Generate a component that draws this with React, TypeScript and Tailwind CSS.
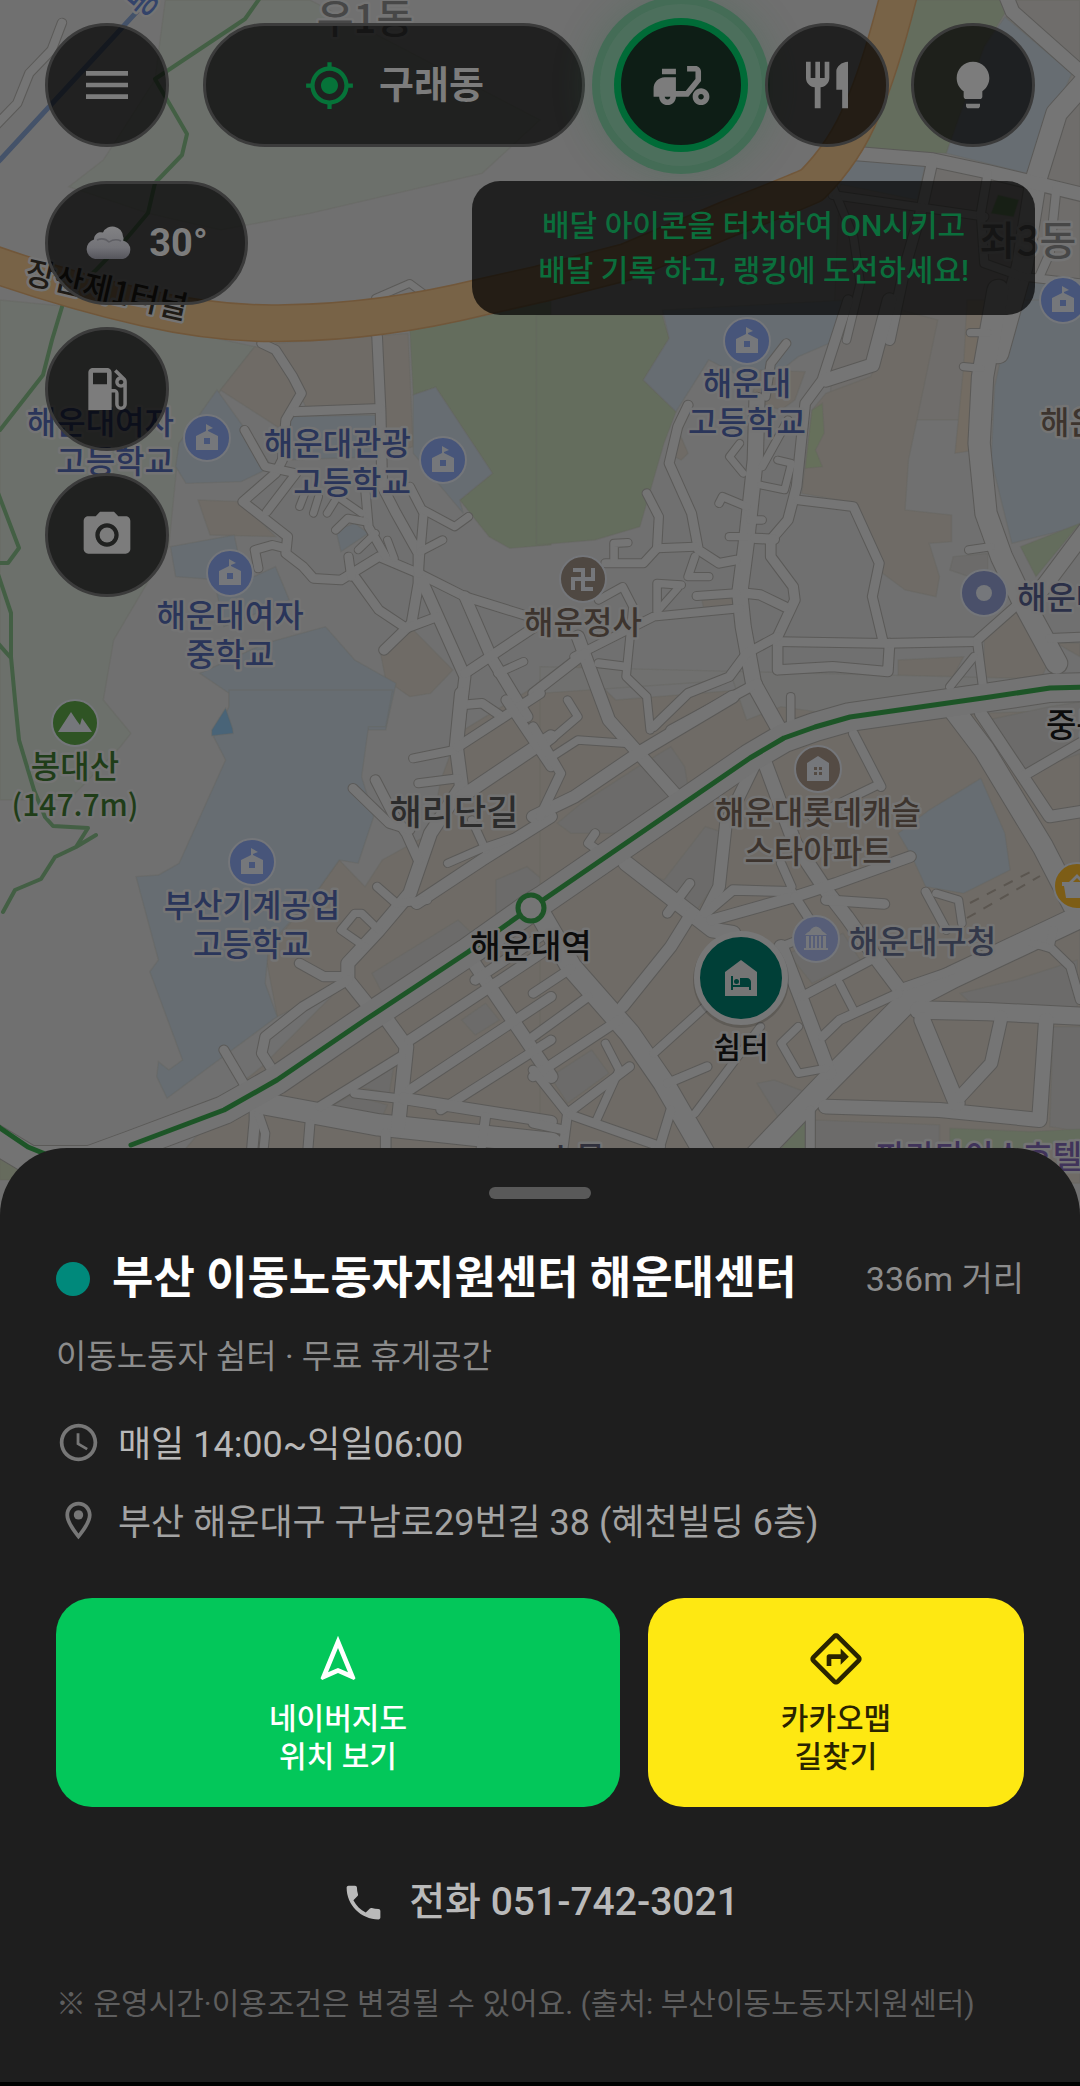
import React from 'react';
import {
  MdMenu,
  MdMyLocation,
  MdLocalGasStation,
  MdPhotoCamera,
  MdAccessTime,
  MdOutlineLocationOn,
  MdOutlineNavigation,
  MdOutlineDirections,
  MdPhone,
  MdNightShelter,
  MdLightbulb,
  MdRestaurant,
} from 'react-icons/md';

type Area = [fill: string, points: string];
type Road = [width: number, points: string];
interface Tile {
  x: number;
  y: number;
  areas: Area[];
  roads: Road[];
}

const BEIGE = '#6f6b66';
const BLUE = '#676d72';
const GREEN = '#646d5d';
const TINT = '#6c706b';
const GREY = '#6c6b6a';

const TILES: Tile[] = [
  {
    x: 0,
    y: 0,
    areas: [[TINT, '480,0 900,0 1568,360 1400,520 900,640 640,690 430,640 200,560 300,480 450,238']],
    roads: [
      [24, '180,68 150,150 85,220 50,310 -20,385'],
      [20, '1085,1000 1090,895 1190,850 1235,885'],
    ],
  },
  {
    x: 540,
    y: 0,
    areas: [
      ['#6f6d6b', '1350,0 1568,0 1568,1260 840,1260 870,560 945,445 1400,540'],
      [GREEN, '1090,0 1345,0 1350,40 1290,140 1180,460 940,450'],
      [BLUE, '1350,50 1545,220 1412,520 1180,460 1290,140'],
      [BLUE, '1400,840 1568,860 1568,1020 1370,1020'],
      [BLUE, '890,480 1120,490 1095,600 860,550'],
      ['#4f6a48', '1330,585 1390,600 1375,650 1310,640'],
    ],
    roads: [
      [40, '1350,-20 1372,35 1590,235'],
      [60, '1590,235 1500,340 1440,540 1400,800 1330,1060'],
      [40, '910,460 1140,480 1300,515 1600,590'],
      [30, '1140,480 1110,620 1060,800 1015,1020'],
      [24, '850,585 1090,620 1290,650'],
      [22, '850,560 910,710 930,850 890,1020'],
      [24, '1300,520 1280,640 1290,790 1400,830 1568,850'],
      [24, '1500,560 1480,760 1450,830'],
    ],
  },
  {
    x: 0,
    y: 300,
    areas: [
      [TINT, '0,0 200,20 740,140 520,430 490,740 330,1020 300,1200 380,1300 350,1340 200,1500 0,1500'],
      [BEIGE, '740,140 640,270 820,390 880,290 800,150'],
      [BEIGE, '800,130 1185,100 1200,440 1110,460 1090,320 890,325'],
      [GREEN, '1190,90 1420,45 1600,0 1600,735 1480,745 1420,710 1335,600 1430,520 1265,262 1200,285'],
      [BLUE, '1200,285 1265,262 1430,520 1335,600 1345,640 1280,560 1200,460'],
      [BLUE, '630,270 520,430 510,500 540,550 700,545 790,500'],
      [BLUE, '830,350 1100,345 1100,470 830,480'],
      [BEIGE, '575,600 700,605 800,710 610,705'],
      [BLUE, '495,740 680,705 700,800 640,840 510,830'],
      [BLUE, '630,880 800,800 840,900 650,980'],
      [BLUE, '975,690 1030,670 1070,700 990,755'],
      [BEIGE, '1200,990 1315,1110 1250,1180 1190,1190 1120,1140 1105,1060'],
      [BLUE, '580,1120 770,1030 945,980 1030,1080 1150,1150 1120,1290 665,1290 665,1180'],
    ],
    roads: [
      [26, '760,130 800,150 850,230 875,280 830,360 820,480 800,520 705,605 835,710 830,760 880,800 910,835 990,840 1100,770 1215,820 1350,890 1568,960'],
      [28, '1095,110 1105,330 1110,560 1150,640 1215,760 1215,850 1195,970 1115,1050'],
      [26, '855,335 1105,325'],
      [32, '1220,830 1350,1130 1330,1300'],
      [32, '1350,890 1430,1080 1530,1250'],
      [26, '1030,830 1100,930 1180,985 1270,950'],
      [24, '710,390 770,500 860,520 775,635'],
      [24, '750,805 740,750 790,735 830,745'],
      [24, '1020,830 1012,770'],
      [24, '1120,770 1070,680 1060,560'],
      [22, '975,690 1010,655 1060,665'],
      [20, '870,620 885,580'],
      [20, '910,640 925,590'],
      [20, '950,640 980,590 1050,640'],
      [24, '1190,560 1230,640 1215,820'],
      [22, '1230,630 1320,680 1360,650'],
      [22, '1220,755 1285,720'],
      [20, '1040,750 1090,700'],
      [20, '1125,720 1145,775'],
      [28, '1350,1120 1568,970'],
      [22, '1445,1120 1520,1085'],
      [26, '1340,1215 1400,1210 1450,1245'],
    ],
  },
  {
    x: 540,
    y: 300,
    areas: [
      [GREEN, '-10,45 355,45 375,115 300,240 395,335 360,430 290,680 160,720 -10,735'],
      [BLUE, '355,30 890,0 840,130 750,170 640,260 490,180 395,335 300,240 375,115'],
      [BEIGE, '640,210 770,215 740,300 700,330 610,300'],
      [BEIGE, '405,400 430,460 410,480 390,470'],
      [BEIGE, '830,280 960,230 1050,30 1155,60 1070,480 1060,630 1195,645 1195,725 1130,730 1160,830 1150,890 1060,870 995,820 985,760 920,610 760,580 790,330'],
      ['#66705b', '790,330 820,310 825,400 800,450 820,500 770,505'],
      ['#736c63', '1240,0 1300,0 1285,230 1265,450 1205,460 1230,200'],
      [BLUE, '1375,0 1600,0 1600,670 1370,730 1310,480 1320,260'],
      [GREEN, '1395,740 1568,670 1440,830'],
      [GREY, '1200,770 1300,760 1300,850 1190,810'],
      [BEIGE, '1290,1020 1400,920 1470,1100 1460,1125 1290,1150'],
      [BEIGE, '1040,1080 1230,1070 1180,1170 1100,1180 1040,1130'],
      [BEIGE, '1500,1030 1568,1030 1568,1070'],
      [BEIGE, '470,900 565,890 565,920 475,925'],
      [BEIGE, '0,1150 110,1100 140,1170 0,1230'],
    ],
    roads: [
      [28, '895,0 820,240 770,310 745,560 720,660 670,720 670,770 735,860 740,900 690,1010 690,1110 850,1100 1010,1115 1015,1030'],
      [40, '1015,0 965,195 830,240'],
      [24, '655,290 670,190 715,130'],
      [44, '630,300 625,480 600,720 580,880 590,980 620,1150 690,1280'],
      [22, '645,500 720,360'],
      [20, '580,430 550,470 590,520'],
      [20, '690,480 730,490 710,570 640,555'],
      [22, '600,620 530,590 520,610'],
      [22, '610,660 645,660'],
      [22, '550,710 600,710'],
      [26, '430,315 400,380 375,490 440,640 460,750 520,790 570,780'],
      [24, '310,580 345,650 340,745 300,790 190,790'],
      [24, '340,745 450,740'],
      [22, '215,780 215,730 255,728'],
      [22, '450,770 430,830 490,830'],
      [24, '455,888 570,880'],
      [20, '400,865 340,935'],
      [22, '340,930 340,850 410,855'],
      [24, '100,1070 330,950 580,925'],
      [28, '600,880 640,885 710,920'],
      [26, '750,600 910,620 985,790 965,890 995,1020'],
      [26, '690,1025 1000,1030 1265,1025 1380,920'],
      [24, '1270,1030 1285,1150'],
      [22, '1260,1070 1190,1160'],
      [28, '625,715 680,718'],
      [22, '170,900 240,860 270,920 250,1130 310,1190 320,1290'],
      [36, '110,1010 200,1260 390,1480'],
      [28, '130,1060 -20,1180'],
      [24, '170,1090 250,1100'],
      [26, '690,1010 600,1060 550,1130 430,1180 330,1280'],
      [28, '630,1150 380,1290'],
      [22, '728,1190 728,1270'],
      [62, '1330,-30 1285,230 1275,430 1295,640 1340,770 1400,900 1500,1090'],
      [22, '1250,98 1300,98'],
      [22, '1230,200 1280,205'],
      [22, '1245,750 1310,740'],
      [46, '1600,670 1440,890'],
      [26, '1480,1015 1600,1010'],
    ],
  },
  {
    x: 0,
    y: 700,
    areas: [
      [BEIGE, '1568,-50 1330,100 1280,240 1250,400 1110,480 1060,560 985,480 930,560 770,760 805,950 1000,850 760,1100 700,1150 540,1345 540,1500 1600,1500 1600,-50'],
      [BLUE, '665,-30 1140,-30 1120,80 1070,80 1050,230 1085,350 1040,490 985,480 930,560 780,740 770,850 805,950 485,1195 455,1130 460,1085 490,1110 530,1080 435,815 460,780 395,530 460,525 520,490 655,180 620,110 665,20'],
      ['#496478', '655,25 615,90 615,107 677,100 675,85'],
      [GREY, '1440,540 1530,500 1600,560 1600,640 1440,640'],
      [GREY, '1080,820 1330,660 1370,700 1110,880'],
      [GREY, '1340,960 1410,910 1450,960 1380,1005'],
      [GREY, '1040,1160 1145,1090 1130,1180'],
      [GREY, '960,1220 1020,1185 1125,1215 1110,1250'],
      ['#666b5d', '0,1350 90,1440 0,1440'],
    ],
    roads: [
      [38, '1340,-20 1325,140 1340,260 1250,400 1190,580 1100,690 1010,790 1010,840 1080,930'],
      [24, '1200,175 1320,150'],
      [24, '1215,250 1330,235'],
      [28, '1330,140 1568,-20'],
      [38, '1340,290 1600,110'],
      [28, '1090,240 1140,340 1180,400 1215,480'],
      [26, '1025,265 1130,370 1190,390'],
      [34, '1210,610 1400,480 1600,350'],
      [22, '1370,360 1410,450'],
      [22, '1300,490 1400,445 1500,410'],
      [28, '1470,0 1600,200'],
      [24, '1095,560 1150,610 1240,600'],
      [22, '1100,690 1050,640 1030,640 990,690 1060,740'],
      [28, '870,790 940,830 1010,830'],
      [28, '1010,840 880,920 770,1010 760,1060 800,1125'],
      [26, '650,1050 730,1190'],
      [30, '740,1180 740,1260 728,1400'],
      [24, '750,1240 770,1300 760,1400'],
      [64, '760,1210 1100,1275 1600,1330'],
      [40, '1110,940 1180,1040 1155,1290'],
      [38, '1370,780 1600,1130'],
      [30, '1190,1020 1600,740'],
      [28, '1190,1170 1600,890'],
      [28, '1380,840 1568,710'],
      [28, '930,1220 1165,1070'],
      [26, '1280,1230 1600,1020'],
      [34, '1170,1195 1600,1265'],
      [26, '1030,1180 1150,1195'],
      [26, '900,1270 890,1400'],
      [26, '1410,1250 1390,1400'],
      [28, '1120,1300 1120,1400'],
    ],
  },
  {
    x: 540,
    y: 700,
    areas: [
      [BEIGE, '0,-60 100,-120 220,0 700,-40 1568,0 1568,1450 0,1450'],
      ['#70706f', '0,-100 1600,-60 1600,30 900,50 700,20 600,60 560,-60 0,-20'],
      [GREY, '120,310 300,190 380,140 420,200 430,260 360,310 250,400 90,400 50,370'],
      [GREY, '270,510 360,540 480,380 540,400 520,530 430,670'],
      [GREY, '1300,60 1480,20 1600,0 1600,150 1400,220'],
      [GREY, '720,760 880,700 930,780 790,850'],
      [GREY, '30,1130 150,1050 200,1120 80,1210'],
      [GREY, '1220,880 1380,840 1560,780 1560,930 1250,910'],
      [GREY, '1490,980 1600,980 1600,1300 1480,1280'],
      [GREY, '790,1260 1160,1275 1160,1400 790,1400'],
      [GREY, '630,1150 680,1140 780,1180 690,1250'],
      [BLUE, '1040,400 1130,330 1280,235 1350,400 1365,510 1230,580 1120,560 1080,470'],
      [GREEN, '700,1345 770,1260 770,1400'],
      [GREEN, '1190,1285 1430,1295 1600,1285 1600,1345 1190,1345'],
    ],
    roads: [
      [36, '-20,350 100,290 300,150 560,-10'],
      [22, '20,180 110,120 250,130'],
      [22, '20,130 110,50 80,0'],
      [26, '-20,80 60,220 0,350'],
      [34, '620,200 540,370 520,560 480,640'],
      [40, '650,180 740,430 830,570 890,650 980,780 1060,890'],
      [26, '910,100 990,260'],
      [24, '790,350 980,255'],
      [60, '1180,0 1290,150 1460,440 1550,620'],
      [34, '1280,40 1480,350 1600,330'],
      [28, '1400,230 1600,110'],
      [44, '250,490 400,610 500,690 560,700'],
      [26, '370,640 435,550'],
      [24, '160,400 140,430 180,460'],
      [34, '440,640 380,740 240,920'],
      [28, '480,640 560,570 730,575'],
      [32, '500,660 740,590 860,550 1075,470'],
      [28, '830,600 1000,612'],
      [26, '740,590 790,670'],
      [24, '700,490 730,560'],
      [24, '700,740 800,700'],
      [60, '0,640 90,800 260,1000 360,1150 500,1400'],
      [66, '580,1420 830,1150 1070,900 1200,830 1600,635'],
      [52, '1100,930 1300,935 1600,950'],
      [24, '330,1060 480,920'],
      [26, '-20,880 90,805'],
      [26, '-20,1010 140,890'],
      [28, '-20,1130 230,960'],
      [22, '190,1030 230,1110 160,1270'],
      [26, '-20,1110 80,1240 60,1400'],
      [26, '80,1240 260,1100'],
      [26, '-20,1270 70,1290'],
      [26, '90,1245 350,1340'],
      [26, '370,1150 485,1100'],
      [22, '450,1240 640,980'],
      [40, '700,740 760,900 840,1120'],
      [26, '760,890 960,780'],
      [22, '870,850 910,930'],
      [26, '820,1010 870,960 1040,880'],
      [22, '830,1105 750,1120 700,1030 750,980'],
      [42, '830,1220 1160,1230 1450,1260 1470,960'],
      [46, '1110,960 1210,1210'],
      [36, '1340,950 1310,1090 1220,1190'],
      [26, '785,1230 785,1400'],
      [26, '330,1400 380,1230'],
      [24, '1120,575 1180,690'],
      [22, '1150,580 1215,600 1225,670'],
      [24, '1060,860 1200,810'],
      [24, '1490,690 1480,740 1540,800 1568,900'],
      [22, '1430,730 1480,745'],
    ],
  },
];

const RAILWAY = '131,1145 224,1110 277,1080 365,1020 468,952 530,908 543,900 750,758 784,738 815,727 850,717 990,697 1050,688 1090,687';
const RAILWAY_BED = `-20,1130 30,1160 90,1160 ${RAILWAY}`;
const HIGHWAY =
  'M-10 263Q70 291 145 308T286 323Q380 322 482 297L540 284L626 262L730 218Q790 195 812 185Q845 152 862 110Q880 70 900 -10';

type PinKind = 'school' | 'temple' | 'mountain' | 'apartment' | 'office' | 'donut' | 'market';

const PIN_FILL: Record<PinKind, string> = {
  school: '#47557a',
  temple: '#4f4842',
  mountain: '#2f5424',
  apartment: '#544b44',
  office: '#575e78',
  donut: '#4a506a',
  market: '#7d5d16',
};

const PINS: [kind: PinKind, x: number, y: number][] = [
  ['school', 207, 438],
  ['school', 443, 460],
  ['school', 230, 573],
  ['school', 747, 341],
  ['school', 1063, 300],
  ['school', 252, 862],
  ['temple', 583, 579],
  ['mountain', 75, 723],
  ['apartment', 818, 769],
  ['office', 816, 939],
  ['donut', 984, 593],
  ['market', 1077, 886],
];

interface Label {
  lines: string[];
  x: number;
  y: number;
  fill: string;
  size?: number;
  anchor?: 'start' | 'middle' | 'end';
  rotate?: number;
}

const NAVY = '#2a355a';
const BROWN = '#3d342e';
const FOREST = '#1f3d18';

const LABELS: Label[] = [
  { lines: ['우1동'], x: 365, y: 33, fill: '#474747', size: 40 },
  { lines: ['좌3동'], x: 980, y: 255, fill: '#474747', size: 40, anchor: 'start' },
  { lines: ['동'], x: 152, y: 8, fill: '#33436a', rotate: -50 },
  { lines: ['장산제1터널'], x: 104, y: 301, fill: '#1f1b16', size: 32, rotate: 13 },
  { lines: ['해운대여자', '고등학교'], x: 174, y: 434, fill: NAVY, anchor: 'end' },
  { lines: ['해운대관광', '고등학교'], x: 411, y: 455, fill: NAVY, anchor: 'end' },
  { lines: ['해운대여자', '중학교'], x: 230, y: 627, fill: NAVY },
  { lines: ['해운대', '고등학교'], x: 747, y: 395, fill: NAVY },
  { lines: ['부산기계공업', '고등학교'], x: 252, y: 917, fill: NAVY },
  { lines: ['해운정사'], x: 583, y: 634, fill: BROWN },
  { lines: ['해운대롯데캐슬', '스타아파트'], x: 818, y: 824, fill: BROWN },
  { lines: ['봉대산'], x: 75, y: 778, fill: FOREST },
  { lines: ['(147.7m)'], x: 75, y: 816, fill: FOREST, size: 30 },
  { lines: ['해리단길'], x: 454, y: 825, fill: '#2c2c2c', size: 35 },
  { lines: ['해운대역'], x: 531, y: 958, fill: '#0c0c0c', size: 33 },
  { lines: ['해운대구청'], x: 849, y: 953, fill: '#333849', anchor: 'start' },
  { lines: ['해운대'], x: 1017, y: 609, fill: '#2b3048', anchor: 'start' },
  { lines: ['해운'], x: 1040, y: 434, fill: BROWN, anchor: 'start' },
  { lines: ['중동'], x: 1046, y: 737, fill: '#0c0c0c', size: 33, anchor: 'start' },
  { lines: ['쉼터'], x: 741, y: 1058, fill: '#0c0c0c', size: 30 },
  { lines: ['파라다이스호텔'], x: 876, y: 1168, fill: '#40335a', anchor: 'start' },
  { lines: ['스몰'], x: 546, y: 1170, fill: '#30303c', anchor: 'start' },
];

function PinGlyph({ kind }: { kind: PinKind }) {
  const ink = '#75777b';
  switch (kind) {
    case 'school':
      return (
        <>
          <path fill={ink} d="M-11 12V-2L-1 -7V-14L6 -10L1 -8V-7L11 -2V12Z" />
          <path fill={PIN_FILL.school} d="M-3 0h6v6h-6z" />
        </>
      );
    case 'temple':
      return <path fill="none" stroke={ink} strokeWidth="4" d="M-10 -9H0V10H10M0 0H10V-11M-10 11V0H0" />;
    case 'mountain':
      return <path fill={ink} d="M-17 9L-4 -11L2 -2L5 2L7 -5L17 9Z" />;
    case 'apartment':
      return (
        <>
          <path fill={ink} d="M-11 12V-6L0 -13L11 -6V12Z" />
          <path fill={PIN_FILL.apartment} d="M-4 -2h3v3h-3zM1 -2h3v3h-3zM-4 3h3v3h-3zM1 3h3v3h-3z" />
        </>
      );
    case 'office':
      return (
        <path
          fill={ink}
          d="M-11 -4C-9 -7 -6 -7 -5 -10Q0 -15 5 -10C6 -7 9 -7 11 -4ZM-10 -3h3v12h-3zM-5 -3h2v12h-2zM-1 -3h2v12h-2zM3 -3h2v12h-2zM7 -3h3v12h-3zM-12 9h24v2h-24z"
        />
      );
    case 'donut':
      return <circle r="8" fill={ink} />;
    case 'market':
      return <path fill={ink} d="M-15 -4H-8L0 -12L8 -4H15V0H13L11 12H-11L-13 0H-15ZM0 -8L-4 -4H4Z" />;
  }
}

function MapCanvas() {
  const place = (t: Tile) => `translate(${t.x} ${t.y}) scale(0.3444 0.3333)`;
  return (
    <svg
      className="absolute inset-x-0 top-0 h-full w-full"
      viewBox="0 0 1080 1228"
      preserveAspectRatio="xMidYMin slice"
      role="img"
      aria-label="해운대역 주변 지도"
    >
      <rect width="1080" height="1228" fill="#707070" />
      {TILES.map((t, i) => (
        <g key={i} transform={place(t)}>
          {t.areas.map(([fill, points], j) => (
            <polygon key={j} points={points} fill={fill} stroke="#65645f" strokeOpacity="0.35" strokeWidth="4" />
          ))}
        </g>
      ))}
      <g fill="none" strokeLinecap="round" strokeLinejoin="round">
        {TILES.map((t, i) => (
          <g key={i} transform={place(t)} stroke="#5b5a58">
            {t.roads.map(([w, points], j) => (
              <polyline key={j} points={points} strokeWidth={w + 6} />
            ))}
          </g>
        ))}
        <polyline points={RAILWAY_BED} stroke="#5b5a58" strokeWidth="30" />
        {TILES.map((t, i) => (
          <g key={i} transform={place(t)} stroke="#757575">
            {t.roads.map(([w, points], j) => (
              <polyline key={j} points={points} strokeWidth={w} />
            ))}
          </g>
        ))}
        <polyline points={RAILWAY_BED} stroke="#737373" strokeWidth="28" />
        <polyline points={RAILWAY} stroke="#1d5527" strokeWidth="5" />
        <path d="M-10 1120L0 1128L28 1147L60 1160" stroke="#1d5527" strokeWidth="5" />
        <path
          d="M262 -5L245 19L155 79L187 134L182 155L155 183L148 213L127 238L96 270L65 297L52 340L43 375L0 430M-5 485L19 548L8 563H-5M-5 565L11 613V657L15 700L19 740L34 790L45 817L53 826L88 828L76 847M96 835L76 847L55 857L41 879L15 890L3 912M-5 640L11 658"
          stroke="#435f44"
          strokeWidth="4"
        />
        <path d="M155 -8L0 160L-5 165" stroke="#445269" strokeWidth="5" />
        <path d="M970 903L1034 870M967 918L1040 876" stroke="#5b5650" strokeWidth="2" strokeDasharray="10 9" strokeLinecap="butt" />
        <path d={HIGHWAY} stroke="#71573a" strokeWidth="38" />
        <path d={HIGHWAY} stroke="#786347" strokeWidth="35" />
      </g>
      <circle cx="531" cy="908" r="13" fill="#757575" stroke="#1d5527" strokeWidth="5" />
      {PINS.map(([kind, x, y], i) => (
        <g key={i} transform={`translate(${x} ${y})`}>
          <circle r="23" fill={PIN_FILL[kind]} stroke="#74767a" strokeWidth="2" />
          <PinGlyph kind={kind} />
        </g>
      ))}
      <circle cx="741" cy="980" r="48" fill="#000" opacity="0.15" />
      <circle cx="741" cy="978" r="44" fill="#003f37" stroke="#777" strokeWidth="6" />
      <MdNightShelter x={717} y={954} size={48} color="#757575" />
      <g
        stroke="#747474"
        strokeWidth="5"
        strokeLinejoin="round"
        paintOrder="stroke"
        className="[font-family:'Noto_Sans_CJK_KR',sans-serif]"
      >
        {LABELS.map((l, i) => (
          <text
            key={i}
            fill={l.fill}
            fontSize={l.size ?? 32}
            fontWeight={500}
            textAnchor={l.anchor ?? 'middle'}
            transform={l.rotate ? `rotate(${l.rotate} ${l.x} ${l.y})` : undefined}
          >
            {l.lines.map((line, j) => (
              <tspan key={j} x={l.x} y={l.y + j * 39}>
                {line}
              </tspan>
            ))}
          </text>
        ))}
      </g>
    </svg>
  );
}

function ScooterIcon() {
  return (
    <svg viewBox="0 0 24 24" className="size-[67px]" fill="currentColor" aria-hidden="true">
      <path d="M19 7c0-1.1-.9-2-2-2h-3v2h3v2.65L13.52 14H10V9H6c-2.21 0-4 1.79-4 4v3h2c0 1.66 1.34 3 3 3s3-1.34 3-3h4.48L19 10.35V7zM7 17c-.55 0-1-.45-1-1h2c0 .55-.45 1-1 1z" />
      <path d="M5 6h5v2H5zM19 13c-1.66 0-3 1.34-3 3s1.34 3 3 3 3-1.34 3-3-1.34-3-3-3zm0 4c-.55 0-1-.45-1-1s.45-1 1-1 1 .45 1 1-.45 1-1 1z" />
    </svg>
  );
}

function CloudIcon() {
  return (
    <svg viewBox="0 0 48 34" className="h-[34px] w-12" aria-hidden="true">
      <defs>
        <linearGradient id="cloud" x1="0" y1="0" x2="0" y2="1">
          <stop offset="0" stopColor="#828284" />
          <stop offset="0.65" stopColor="#727277" />
          <stop offset="1" stopColor="#55555c" />
        </linearGradient>
      </defs>
      <path
        fill="url(#cloud)"
        d="M10 33a10 10 0 0 1-1-19.500a7 7 0 0 1 9-7a10.500 10.500 0 0 1 20 4a4 4 0 0 1 0 4a9.500 9.500 0 0 1 0 18.500z"
      />
      <path fill="none" stroke="#5f5f64" strokeWidth="1.500" d="M12 14q7-3 12 2q6-4 12-1" />
    </svg>
  );
}

const ROUND =
  'flex size-[124px] shrink-0 items-center justify-center rounded-full border-3 border-[#3b3b3b] bg-black/70 text-[#7c7c7c]';

export default function App() {
  return (
    <main className="flex min-h-screen flex-col bg-black [font-family:Roboto,'Noto_Sans_CJK_KR',sans-serif]">
      <section className="relative flex-1 bg-[#707070]">
        <div className="absolute inset-x-0 top-0 -bottom-20 overflow-hidden">
          <MapCanvas />
        </div>
        <div className="relative flex flex-col gap-[34px] px-[45px] pt-[23px]">
          <header className="flex gap-[34px]">
            <button type="button" aria-label="메뉴" className={ROUND}>
              <MdMenu className="size-14" />
            </button>
            <button
              type="button"
              className="flex h-[124px] flex-1 items-center justify-center gap-6 rounded-full border-3 border-[#3b3b3b] bg-black/70 text-[38px] font-bold text-[#7c7c7c]"
            >
              <MdMyLocation className="size-[51px] text-[#067339]" />
              구래동
            </button>
            <nav className="flex gap-[22px]">
              <button
                type="button"
                aria-label="배달"
                className="flex size-[124px] items-center justify-center rounded-full border-2 border-[#006b37] bg-[#0e1e16] text-[#7c7c7c] shadow-[0_0_0_5px_#006b37,0_0_0_19px_rgba(78,112,93,0.9),0_0_0_27px_rgba(64,107,84,0.9),0_0_36px_32px_rgba(40,105,70,0.22)]"
              >
                <ScooterIcon />
              </button>
              <button type="button" aria-label="맛집" className={ROUND}>
                <MdRestaurant className="size-14" />
              </button>
              <button type="button" aria-label="도움말" className={ROUND}>
                <MdLightbulb className="size-14" />
              </button>
            </nav>
          </header>
          <div className="flex items-start justify-between">
            <div className="flex flex-col gap-[22px]">
              <button
                type="button"
                aria-label="날씨 흐림 30도"
                className="flex h-[124px] w-[203px] items-center justify-center gap-4 rounded-full border-3 border-[#3b3b3b] bg-black/70 text-[38px] font-bold text-[#7c7c7c]"
              >
                <CloudIcon />
                30°
              </button>
              <button type="button" aria-label="주유소" className={ROUND}>
                <MdLocalGasStation className="size-14" />
              </button>
              <button type="button" aria-label="사진" className={ROUND}>
                <MdPhotoCamera className="size-14" />
              </button>
            </div>
            <p className="rounded-[28px] bg-black/70 px-[66px] py-[22px] text-center text-[30px] leading-[45px] font-medium text-[#0b6e3c]">
              배달 아이콘을 터치하여 ON시키고
              <br />
              배달 기록 하고, 랭킹에 도전하세요!
            </p>
          </div>
        </div>
      </section>

      <section className="relative rounded-t-[67px] bg-[#1e1e1e] px-14 pt-[39px] pb-14">
        <div className="mx-auto h-3 w-[102px] rounded-full bg-[#595959]" />
        <div className="mt-[50px] flex items-center">
          <span className="size-[34px] shrink-0 rounded-full bg-[#00897b]" />
          <h1 className="ml-[22px] flex-1 text-[45px] leading-[60px] font-bold text-white">부산 이동노동자지원센터 해운대센터</h1>
          <span className="shrink-0 text-[34px] leading-[60px] text-[#8c8c8c]">336m 거리</span>
        </div>
        <p className="mt-[26px] text-[33px] leading-[44px] text-[#8c8c8c]">이동노동자 쉼터 · 무료 휴게공간</p>
        <div className="mt-[41px] flex flex-col gap-7 text-[36px] leading-[50px]">
          <div className="flex items-start gap-[17px]">
            <MdAccessTime className="size-[45px] shrink-0 text-[#777]" />
            <p className="text-[#b8b8b8]">매일 14:00~익일06:00</p>
          </div>
          <div className="flex items-start gap-[17px]">
            <MdOutlineLocationOn className="size-[45px] shrink-0 text-[#777]" />
            <p className="text-[#a3a3a3]">부산 해운대구 구남로29번길 38 (혜천빌딩 6층)</p>
          </div>
        </div>
        <div className="mt-[50px] grid grid-cols-[3fr_2fr] gap-7 text-center text-[30px] leading-[38px] font-medium">
          <a href="#naver-map" className="flex flex-col items-center gap-[13px] rounded-[36px] bg-[#03c75a] pt-[33px] pb-[31px] text-white">
            <MdOutlineNavigation className="size-14" />
            <span>
              네이버지도
              <br />
              위치 보기
            </span>
          </a>
          <a href="#kakao-map" className="flex flex-col items-center gap-[13px] rounded-[36px] bg-[#fee812] pt-[33px] pb-[31px] text-[#2a2400]">
            <MdOutlineDirections className="size-14" />
            <span>
              카카오맵
              <br />
              길찾기
            </span>
          </a>
        </div>
        <a
          href="tel:051-742-3021"
          className="mt-[65px] flex items-center justify-center gap-[23px] text-[39px] leading-[60px] font-medium text-[#bababa]"
        >
          <MdPhone className="size-[45px]" />
          전화 051-742-3021
        </a>
        <p className="mt-[50px] text-[30px] leading-[44px] text-[#5e5e5e]">
          ※ 운영시간·이용조건은 변경될 수 있어요. (출처: 부산이동노동자지원센터)
        </p>
      </section>
      <div className="h-1 bg-black" />
    </main>
  );
}
